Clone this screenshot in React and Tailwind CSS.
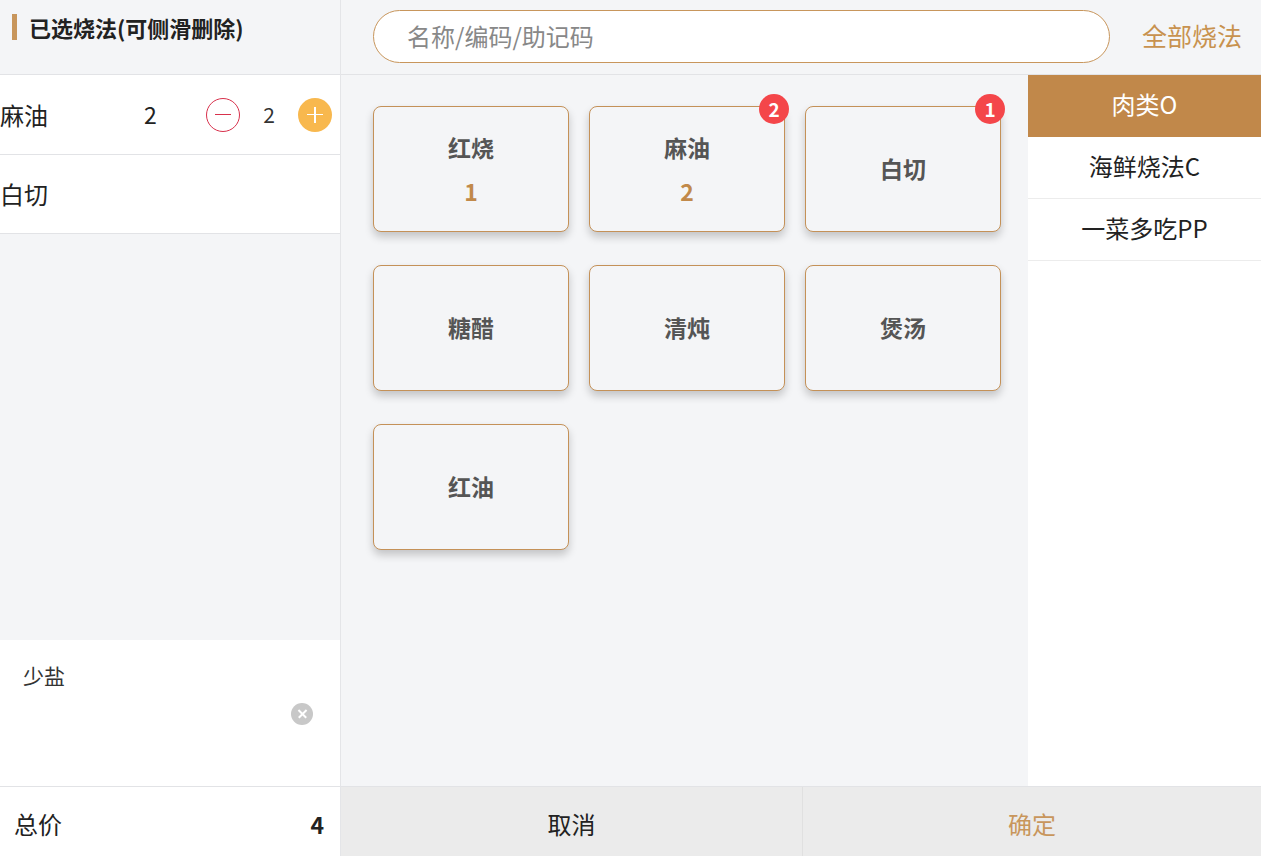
import React from "react";

const font = { fontFamily: '"Noto Sans CJK SC", "Noto Sans", sans-serif' };

const methods = [
  { name: "红烧", count: 1 },
  { name: "麻油", count: 2, badge: 2 },
  { name: "白切", badge: 1 },
  { name: "糖醋" },
  { name: "清炖" },
  { name: "煲汤" },
  { name: "红油" },
];

const categories = ["肉类O", "海鲜烧法C", "一菜多吃PP"];

const App = () => {
  return (
    <div className="flex h-[856px] w-[1261px] overflow-hidden bg-[#f4f5f7] text-[#222]" style={font}>
      {/* left: selected */}
      <div className="flex w-[341px] flex-col border-r border-[#e4e5e8]">
        <div className="h-[75px] border-b border-[#e2e3e6] bg-[#f4f5f7] pl-3 pt-[14px]">
          <div className="flex items-center gap-3">
            <span className="h-[26px] w-[5px] bg-[#c8965c]"></span>
            <span className="text-[22px] font-bold leading-[26px] text-[#222]">已选烧法(可侧滑删除)</span>
          </div>
        </div>
        <div className="flex h-[80px] items-center border-b border-[#e2e3e6] bg-white pr-2">
          <span className="w-[144px] text-[24px]">麻油</span>
          <span className="w-[62px] text-[23px]">2</span>
          <span className="flex h-[34px] w-[34px] items-center justify-center rounded-full border-[1.5px] border-[#d8314c]">
            <span className="h-[1.5px] w-[16px] bg-[#d8314c]"></span>
          </span>
          <span className="w-[58px] text-center text-[21px] text-[#333]">2</span>
          <span className="relative flex h-[34px] w-[34px] items-center justify-center rounded-full bg-[#f8b84e]">
            <span className="absolute h-[1.5px] w-[16px] bg-white"></span>
            <span className="absolute h-[16px] w-[1.5px] bg-white"></span>
          </span>
        </div>
        <div className="flex h-[79px] items-center border-b border-[#e2e3e6] bg-white">
          <span className="text-[24px]">白切</span>
        </div>
        <div className="flex-1"></div>
        <div className="flex h-[147px] flex-col border-b border-[#e2e3e6] bg-white px-[23px] pt-[20px]">
          <span className="text-[21px] leading-[30px] text-[#333]">少盐</span>
          <div className="mt-[13px] flex justify-end pr-[4px]">
            <span className="relative flex h-[22px] w-[22px] items-center justify-center rounded-full bg-[#c8c8c8]">
              <span className="absolute h-[1.5px] w-[11px] rotate-45 bg-white"></span>
              <span className="absolute h-[1.5px] w-[11px] -rotate-45 bg-white"></span>
            </span>
          </div>
        </div>
        <div className="flex h-[69px] items-center justify-between bg-white pl-[14px] pr-[16px] pt-[5px]">
          <span className="text-[24px]">总价</span>
          <span className="text-[23px] font-bold">4</span>
        </div>
      </div>

      {/* right */}
      <div className="flex flex-1 flex-col">
        <div className="flex h-[75px] items-center border-b border-[#e2e3e6] pb-[2px] pl-[32px] pr-[19px]">
          <div className="flex h-[53px] w-[737px] items-center rounded-full border-[1.5px] border-[#c8965c] bg-white px-[33px] text-[24px] text-[#888]">
            名称/编码/助记码
          </div>
          <span className="ml-auto text-[25px] text-[#c8924f]">全部烧法</span>
        </div>
        <div className="flex flex-1">
          <div className="flex-1 pl-[32px] pt-[31px]">
            <div className="grid grid-cols-[196px_196px_196px] gap-x-[20px] gap-y-[33px]">
              {methods.map((m, i) => (
                <div
                  key={i}
                  className="relative flex h-[126px] flex-col items-center justify-center gap-[18px] rounded-[8px] border-[1.5px] border-[#c49158] bg-[#f4f5f7] pb-[3px] shadow-[0_5px_9px_rgba(0,0,0,0.2)]"
                >
                  <span className="text-[23px] font-bold leading-[28px] text-[#555]">{m.name}</span>
                  {m.count && <span className="text-[23px] font-bold leading-[24px] text-[#c1894a]">{m.count}</span>}
                  {m.badge && (
                    <span className="absolute right-[-5px] top-[-13px] flex h-[30px] w-[30px] items-center justify-center rounded-full bg-[#f4464a] text-[19px] font-bold text-white">
                      {m.badge}
                    </span>
                  )}
                </div>
              ))}
            </div>
          </div>
          <div className="w-[233px] bg-white">
            {categories.map((c, i) => (
              <div
                key={i}
                className={
                  i === 0
                    ? "flex h-[62px] items-center justify-center pb-[4px] bg-[#c1884a] text-[24px] text-white"
                    : "flex h-[62px] items-center justify-center pb-[4px] border-b border-[#ececec] text-[24px] text-[#222]"
                }
              >
                {c}
              </div>
            ))}
          </div>
        </div>
        <div className="flex h-[70px] border-t border-[#e2e3e6] bg-[#ebebeb]">
          <div className="flex flex-1 items-center justify-center border-r border-[#e0e0e0] pt-[5px] text-[24px] text-[#222]">取消</div>
          <div className="flex w-[458px] items-center justify-center pt-[5px] text-[24px] text-[#c8965c]">确定</div>
        </div>
      </div>
    </div>
  );
};

export default App;
